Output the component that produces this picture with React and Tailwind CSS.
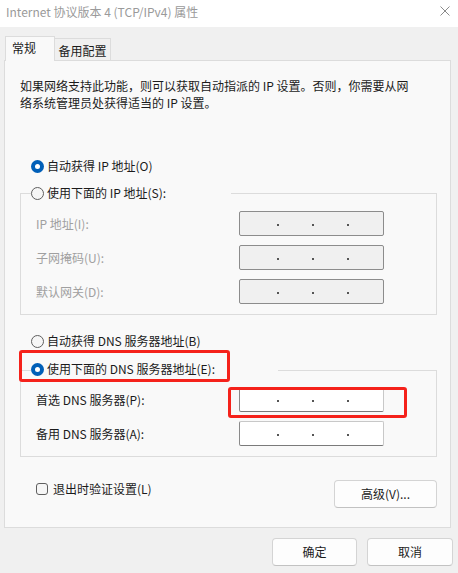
import React from "react";

const font = "font-['Noto_Sans_CJK_SC','Noto_Sans',sans-serif]";

function Radio({ checked }) {
  return checked ? (
    <div className="w-[13px] h-[13px] rounded-full bg-[#005fb8] flex items-center justify-center shrink-0">
      <div className="w-[5px] h-[5px] rounded-full bg-white" />
    </div>
  ) : (
    <div className="w-[13px] h-[13px] rounded-full border border-[#5f5f5f] bg-[#f6f6f6] shrink-0" />
  );
}

function IpBox({ disabled }) {
  return (
    <div
      className={
        "w-[145px] h-[25px] rounded-[2px] border flex items-center pl-[37px] gap-[33px] " +
        (disabled
          ? "bg-[#f0f0f0] border-[#8c8c8c]"
          : "bg-white border-[#c8c8c8] border-l-[#8a8a8a] border-b-[#7a7a7a]")
      }
    >
      <div className="w-[2px] h-[2px] bg-[#555] mt-[3px]" />
      <div className="w-[2px] h-[2px] bg-[#555] mt-[3px]" />
      <div className="w-[2px] h-[2px] bg-[#555] mt-[3px]" />
    </div>
  );
}

function Row({ label, disabled, first }) {
  return (
    <div className={"flex items-center h-[25px] " + (first ? "mt-[10px]" : "mt-[9px]")}>
      <div
        className={
          "w-[218px] pl-[15px] leading-[16px] whitespace-nowrap " +
          (disabled ? "text-[#a0a0a0]" : "text-[#1b1b1b]")
        }
      >
        {label}
      </div>
      <IpBox disabled={disabled} />
    </div>
  );
}

function Button({ children, w }) {
  return (
    <div
      className={
        "h-[28px] rounded-[4px] border border-[#d4d4d4] border-b-[#c2c2c2] bg-[#fdfdfd] flex items-center justify-center leading-[16px] " +
        w
      }
    >
      {children}
    </div>
  );
}

export default function App() {
  return (
    <div className={"relative w-[458px] h-[573px] bg-[#f0f0f0] flex flex-col text-[12px] text-[#1b1b1b] " + font}>
      {/* Title bar */}
      <div className="h-[27px] bg-white flex items-start justify-between pl-[6px] pr-[8px] pt-[4px]">
        <span className="leading-[16px] text-[#9a9a9a] whitespace-nowrap">
          Internet 协议版本 4 (TCP/IPv4) 属性
        </span>
        <svg width="10" height="10" viewBox="0 0 10 10" className="mt-[2px]">
          <path d="M0.5 0.5 L9.5 9.5 M9.5 0.5 L0.5 9.5" stroke="#8a8a8a" strokeWidth="1" />
        </svg>
      </div>

      {/* Tabs */}
      <div className="flex items-end pl-[5px] pt-[9px]">
        <div className="relative z-10 w-[50px] h-[25px] mb-[-1px] border border-b-0 border-[#dcdcdc] bg-[#f9f9f9] pl-[6px] pt-[3px] leading-[16px]">
          常规
        </div>
        <div className="w-[56px] h-[22px] border border-l-0 border-b-0 border-[#dcdcdc] bg-[#f0f0f0] flex justify-center pt-[4px] leading-[16px]">
          备用配置
        </div>
      </div>

      {/* Panel */}
      <div className="ml-[4px] w-[447px] h-[468px] border border-[#dcdcdc] bg-[#f9f9f9] pl-[15px] flex flex-col">
        <div className="mt-[16px] leading-[17px] whitespace-nowrap">
          如果网络支持此功能，则可以获取自动指派的 IP 设置。否则，你需要从网
          <br />
          络系统管理员处获得适当的 IP 设置。
        </div>

        <div className="mt-[47px] ml-[11px] flex items-center gap-[3px] h-[16px] leading-[16px]">
          <Radio checked />
          <span>自动获得 IP 地址(O)</span>
        </div>

        {/* Group 1 */}
        <div className="mt-[19px] w-[417px] border border-[#dcdcdc] pb-[10px]">
          <div className="-mt-[9px] ml-[10px] w-[200px] h-[16px] bg-[#f9f9f9] flex items-center gap-[3px] leading-[16px]">
            <Radio />
            <span>使用下面的 IP 地址(S):</span>
          </div>
          <Row label="IP 地址(I):" disabled first />
          <Row label="子网掩码(U):" disabled />
          <Row label="默认网关(D):" disabled />
        </div>

        <div className="mt-[18px] ml-[11px] flex items-center gap-[3px] h-[16px] leading-[16px]">
          <Radio />
          <span>自动获得 DNS 服务器地址(B)</span>
        </div>

        {/* Group 2 */}
        <div className="mt-[21px] w-[417px] border border-[#dcdcdc] pb-[10px]">
          <div className="-mt-[10px] ml-[10px] w-[247px] h-[16px] bg-[#f9f9f9] flex items-center gap-[3px] leading-[16px]">
            <Radio checked />
            <span>使用下面的 DNS 服务器地址(E):</span>
          </div>
          <Row label="首选 DNS 服务器(P):" first />
          <Row label="备用 DNS 服务器(A):" />
        </div>

        <div className="mt-[23px] w-[417px] flex items-start justify-between">
          <div className="mt-[1px] pl-[16px] flex items-center gap-[5px] h-[16px] leading-[16px]">
            <div className="w-[12px] h-[12px] rounded-[3px] border border-[#5f5f5f] bg-[#f6f6f6]" />
            <span>退出时验证设置(L)</span>
          </div>
          <Button w="w-[103px]">高级(V)...</Button>
        </div>
      </div>

      {/* Bottom buttons */}
      <div className="mt-[10px] flex justify-end gap-[10px] pr-[5px]">
        <Button w="w-[85px]">确定</Button>
        <Button w="w-[86px]">取消</Button>
      </div>

      {/* Red annotation boxes */}
      <div className="absolute left-[19px] top-[350px] w-[211px] h-[32px] border-[3px] border-[#f5221b] rounded-[3px]" />
      <div className="absolute left-[228px] top-[387px] w-[179px] h-[31px] border-[3px] border-[#f5221b] rounded-[3px]" />
    </div>
  );
}
